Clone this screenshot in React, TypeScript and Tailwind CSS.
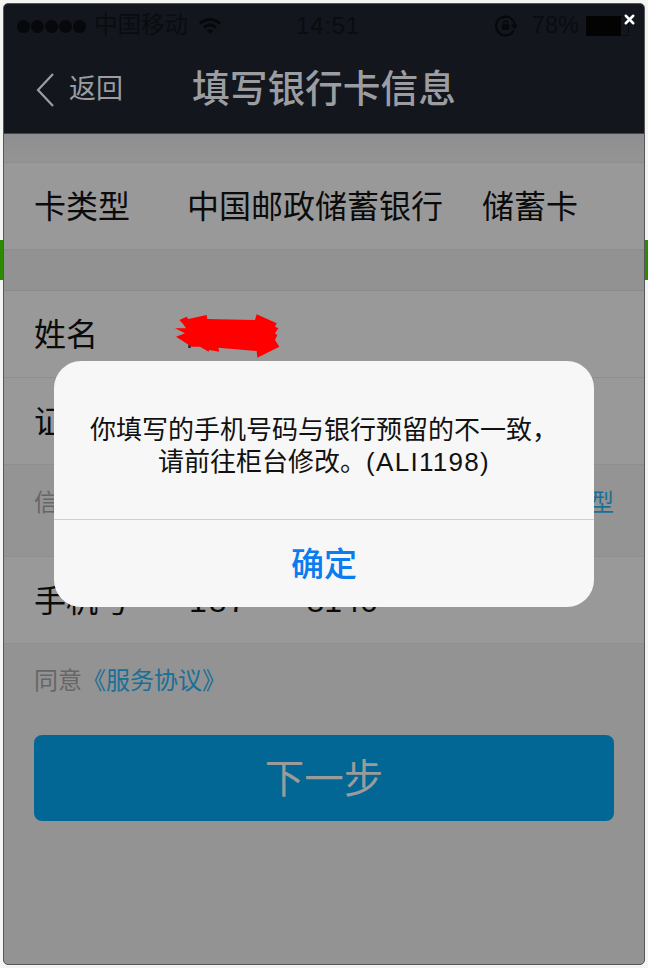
import React from 'react';
import { X } from 'lucide-react';

const FONT = '[font-family:"Liberation_Sans","Noto_Sans_CJK_SC",sans-serif]';

const Row: React.FC<{ children: React.ReactNode; height?: string }> = ({ children, height = 'h-[87px]' }) => (
  <div className={`${height} flex items-center pl-[30px] pr-[30px] pt-[2px] bg-[#999999] border-b border-[#8e8e8e] text-[32px] text-[#0b0b0b]`}>
    {children}
  </div>
);

const StatusBar = () => (
  <div className="h-[44px] flex items-center text-[#0a0c11] text-[23.5px] relative pl-[13px]">
    <div className="flex gap-[1px]">
      {[0, 1, 2, 3, 4].map(i => (
        <span key={i} className="w-[13px] h-[13px] rounded-full bg-[#07080b]" />
      ))}
    </div>
    <span className="ml-[8px]">中国移动</span>
    <svg className="ml-[10px]" width="24" height="18" viewBox="0 0 24 18" fill="none" stroke="#07080b" strokeWidth="3">
      <path d="M2 6.500C8 1 16 1 22 6.500" />
      <path d="M6 10.500C10 7 14 7 18 10.500" />
      <path d="M12 17l-3.500-3.500c2-1.500 5-1.500 7 0z" fill="#07080b" stroke="none" />
    </svg>
    <span className="ml-[74px] text-[24.500px] tracking-[0.5px]">14:51</span>
    <svg className="ml-[135px]" width="22" height="22" viewBox="0 0 20 20" fill="none" stroke="#07080b" strokeWidth="2">
      <path d="M17 14a8.500 8.500 0 1 1 1-4" />
      <path d="M15 9l3 2.500 1.500-3" />
      <rect x="6.500" y="8.500" width="6.500" height="5" fill="#07080b" stroke="none" />
      <path d="M8 8.500V7a1.600 1.600 0 0 1 3.400 0v1.500" strokeWidth="1.300" />
    </svg>
    <span className="ml-[15px]">78%</span>
    <div className="ml-[7px] w-[35px] h-[20px] bg-[#030304]" />
    <div className="w-[8px] h-[20px] border border-l-0 border-[#0a0c11] rounded-r-[2px]" />
  </div>
);

const Header = () => (
  <div className="h-[130px] bg-[#13161d] border-b border-[#44464c]">
    <StatusBar />
    <div className="h-[85px] flex items-center pl-[31px] pb-[2px] text-[#9b9da1]">
      <svg width="20" height="36" viewBox="0 0 20 36" fill="none" stroke="#9b9da1" strokeWidth="2.200">
        <path d="M18 2L3 18l15 16" />
      </svg>
      <span className="ml-[14px] text-[27px]">返回</span>
      <span className="ml-[69px] text-[37.700px] font-medium">填写银行卡信息</span>
    </div>
  </div>
);

const Scribble = () => (
  <svg className="absolute left-[160px] top-[305px]" width="130" height="60" viewBox="0 0 390 180" fill="#ff0000">
    <rect x="85" y="118" width="7" height="11" fill="#222222" />
    <path d="M58 45L80 35L85 42L140 30L142 42L285 45L290 28L350 55L345 65L355 70L345 85L352 90L345 105L358 125L292 158L290 138L175 128L178 140L148 135L146 140L120 125L95 125L48 95L75 85L45 70L78 70L70 58Z" />
  </svg>
);

const AlertDialog = () => (
  <div className="absolute left-[54px] top-[361px] w-[540px] h-[246px] rounded-[27px] bg-[#f7f7f7] flex flex-col">
    <div className="h-[159px] pt-[53px] border-b border-[#cfcfd1] text-center text-[26px] leading-[32px] text-[#111111]">
      <p>你填写的手机号码与银行预留的不一致，</p>
      <p>
        请前往柜台修改。<span className="tracking-[1.3px]">(ALI1198)</span>
      </p>
    </div>
    <div className="flex-1 flex items-center justify-center pt-[2px] text-[33px] font-medium text-[#0a7cf0]">
      确定
    </div>
  </div>
);

export default function App() {
  return (
    <div className={`${FONT} relative w-[648px] h-[968px] bg-[#f4f4f2] overflow-hidden`}>
      <div className="absolute left-0 top-[240px] w-full h-[40px] bg-[#2c8a00]" />
      <div className="absolute inset-[3px] rounded-[5px] border border-[#55565a] bg-[#939393] overflow-hidden flex flex-col">
        <Header />
        <div className="h-[29px] border-b border-[#8e8e8e] bg-[linear-gradient(#8f8f91,#949494)]" />
        <Row>
          <span className="w-[153px]">卡类型</span>
          <span>中国邮政储蓄银行</span>
          <span className="ml-[39px]">储蓄卡</span>
        </Row>
        <div className="h-[41px] border-b border-[#8a8a8a] bg-[#929292]" />
        <Row>
          <span>姓名</span>
        </Row>
        <Row>
          <span>证</span>
        </Row>
        <div className="h-[92px] flex items-center justify-between pl-[30px] pr-[30px] pb-[16px] border-b border-[#8e8e8e] bg-[#949494] text-[24px] text-[#666666]">
          <span>信</span>
          <span className="text-[#1a6f96]">型</span>
        </div>
        <Row>
          <span className="w-[155px]">手机号</span>
          <span className="tracking-[2px]">187</span>
          <span className="ml-[58px]">8146</span>
        </Row>
        <div className="pl-[30px] pt-[19px] text-[24px] leading-[36px] text-[#666666]">
          同意<span className="text-[#1a6f96]">《服务协议》</span>
        </div>
        <div className="mx-[30px] mt-[36px] h-[86px] pt-[3px] rounded-[8px] bg-[#026794] flex items-center justify-center text-[39.500px] text-[#9b9b9b]">
          下一步
        </div>
      </div>
      <Scribble />
      <AlertDialog />
      <X className="absolute left-[622px] top-[12px] text-white" size={15} strokeWidth={4} />
    </div>
  );
}
